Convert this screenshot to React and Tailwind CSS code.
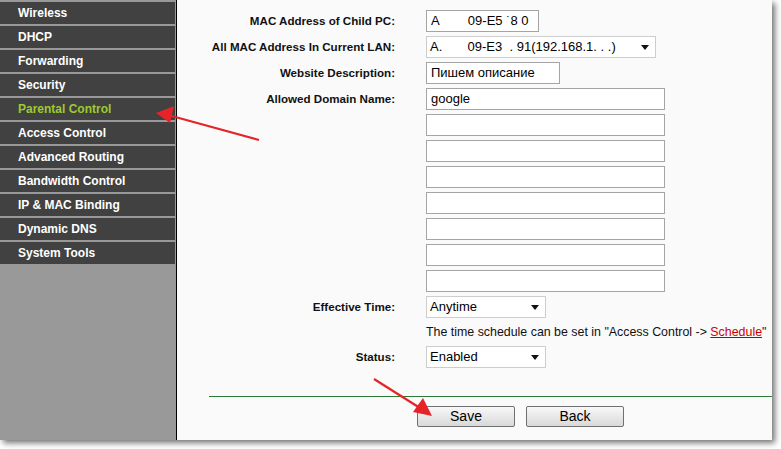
const menu = [
  'Wireless',
  'DHCP',
  'Forwarding',
  'Security',
  'Parental Control',
  'Access Control',
  'Advanced Routing',
  'Bandwidth Control',
  'IP & MAC Binding',
  'Dynamic DNS',
  'System Tools',
]

function Caret() {
  return (
    <svg width="8" height="5" viewBox="0 0 8 5" className="shrink-0">
      <path d="M0 0 H8 L4 5 Z" fill="#111" />
    </svg>
  )
}

function TextBox({ w, value = '' }) {
  return (
    <div
      className="h-[22px] border border-[#a5a5a5] bg-white px-[4px] flex items-center text-[13px] text-black whitespace-pre overflow-hidden"
      style={{ width: w }}
    >
      {value}
    </div>
  )
}

function Select({ w, value }) {
  return (
    <div
      className="h-[22px] border border-[#cdcdcd] bg-white pl-[3px] pr-[6px] flex items-center justify-between text-[13px] text-black whitespace-pre overflow-hidden"
      style={{ width: w }}
    >
      <span>{value}</span>
      <Caret />
    </div>
  )
}

function Row({ label, children }) {
  return (
    <div className="flex items-center h-[22px]">
      <div className="w-[218px] shrink-0 text-right font-bold text-[11.6px] text-[#111]">{label}</div>
      <div className="ml-[31px]">{children}</div>
    </div>
  )
}

function Btn({ children }) {
  return (
    <div className="w-[98px] h-[21px] rounded-[2px] border border-[#707070] bg-gradient-to-b from-[#f8f8f8] to-[#d9d9d9] flex items-center justify-center text-[14px] text-black">
      {children}
    </div>
  )
}

export default function App() {
  return (
    <div className="relative w-[781px] h-[449px] bg-white overflow-hidden" style={{ fontFamily: '"Liberation Sans", Arial, sans-serif' }}>
      <div className="w-[772px] h-[440px] flex shadow-[3px_3px_6px_rgba(0,0,0,0.55)]">
        {/* sidebar */}
        <div className="w-[177px] shrink-0 h-full bg-[#999999] border-r border-black pr-[1px] pt-[2px] flex flex-col gap-[2px]">
          {menu.map((m) => (
            <div
              key={m}
              className={
                'h-[22px] bg-[#414141] pl-[18px] flex items-center font-bold text-[12px] ' +
                (m === 'Parental Control' ? 'text-[#9ccb2c]' : 'text-white')
              }
            >
              {m}
            </div>
          ))}
        </div>

        {/* main form */}
        <div className="flex-1 min-w-0 h-full bg-[#fafafa] pt-[10px]">
          <div className="flex flex-col gap-[4px]">
            <Row label="MAC Address of Child PC:">
              <TextBox w={113} value={'A        09-E5 \u02d98 0'} />
            </Row>
            <Row label="All MAC Address In Current LAN:">
              <Select w={230} value={'A.       09-E3  . 91(192.168.1. . .)'} />
            </Row>
            <Row label="Website Description:">
              <TextBox w={134} value="Пишем описание" />
            </Row>
            <Row label="Allowed Domain Name:">
              <TextBox w={239} value="google" />
            </Row>
            {[0, 1, 2, 3, 4, 5, 6].map((i) => (
              <Row key={i} label="">
                <TextBox w={239} />
              </Row>
            ))}
            <Row label="Effective Time:">
              <Select w={120} value="Anytime" />
            </Row>
          </div>
          <div className="h-[20px] my-[4px] ml-[249px] flex items-center text-[12.4px] text-[#111] whitespace-nowrap">
            The time schedule can be set in "Access Control -&gt;&nbsp;
            <span className="text-[#cc0000] underline decoration-[#800080]">Schedule</span>"
          </div>
          <Row label="Status:">
            <Select w={120} value="Enabled" />
          </Row>
          <div className="mt-[28px] ml-[32px] h-[1px] bg-[#2e7a3a]" />
          <div className="mt-[9px] ml-[240px] flex gap-[11px]">
            <Btn>Save</Btn>
            <Btn>Back</Btn>
          </div>
        </div>
      </div>

      {/* red annotation arrows */}
      <svg className="absolute inset-0 pointer-events-none" width="781" height="449">
        <line x1="259" y1="140" x2="168" y2="115" stroke="#e5242a" strokeWidth="2.2" />
        <polygon points="156,113 174,106 170,123" fill="#e5242a" />
        <line x1="374" y1="379" x2="420" y2="408" stroke="#e5242a" strokeWidth="2.2" />
        <polygon points="432,416 413,412 423,398" fill="#e5242a" />
      </svg>
    </div>
  )
}
